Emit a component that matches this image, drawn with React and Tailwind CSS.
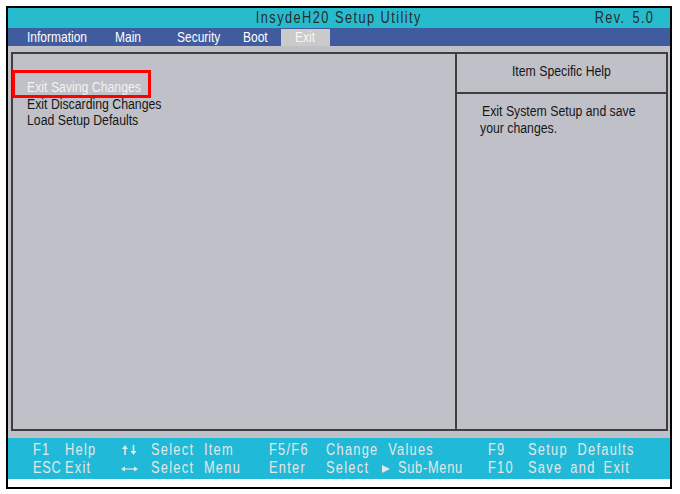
import React from "react";

const Body = ({ children, className = "" }) => (
  <span className={"inline-block whitespace-nowrap origin-left scale-x-[0.877] " + className}>{children}</span>
);

const Foot = ({ children, tight = false, mid = false }) => (
  <span
    className={
      tight
        ? "inline-block whitespace-nowrap origin-left scale-x-[0.8] tracking-[0.9px] [word-spacing:4px]"
        : mid
        ? "inline-block whitespace-nowrap origin-left scale-x-[0.8] tracking-[1.6px] [word-spacing:4px]"
        : "inline-block whitespace-nowrap origin-left scale-x-[0.8] tracking-[1.6px] [word-spacing:6px]"
    }
  >
    {children}
  </span>
);

const UpDown = () => (
  <svg width="15" height="10" viewBox="0 0 15 10" className="mt-[4px]">
    <polygon points="0,4 3,0 6,4" fill="#e6e6e6" />
    <rect x="2.2" y="3" width="1.6" height="7" fill="#e6e6e6" />
    <rect x="10.7" y="0" width="1.6" height="7" fill="#e6e6e6" />
    <polygon points="8.5,6 14.5,6 11.5,10" fill="#e6e6e6" />
  </svg>
);

const LeftRight = () => (
  <svg width="17" height="6" viewBox="0 0 17 6" className="mt-[7px]">
    <rect x="3" y="2.4" width="11" height="1.2" fill="#e6e6e6" />
    <polygon points="0,3 4,0.5 4,5.5" fill="#e6e6e6" />
    <polygon points="17,3 13,0.5 13,5.5" fill="#e6e6e6" />
  </svg>
);

const Tri = () => (
  <svg width="8" height="8" viewBox="0 0 8 8" className="mt-[6px]">
    <polygon points="0,0 8,4 0,8" fill="#e6e6e6" />
  </svg>
);

export default function App() {
  return (
    <div className="w-[680px] h-[494px] bg-white pt-[6px] pl-[6px] font-['Liberation_Sans',Arial,sans-serif]">
      <div className="w-[666px] h-[483px] border-2 border-black flex flex-col bg-white">
        {/* Title */}
        <div className="h-[20px] bg-[#26bcce] grid grid-cols-[1fr_auto_1fr] items-center text-[16px] leading-[20px] text-[#2b2b2b]">
          <div />
          <span className="inline-block whitespace-nowrap origin-center scale-x-[0.8] tracking-[1.8px]">InsydeH20 Setup Utility</span>
          <div className="justify-self-end pr-[16px]">
            <span className="inline-block whitespace-nowrap origin-right scale-x-[0.8] tracking-[1.6px] [word-spacing:3px]">Rev. 5.0</span>
          </div>
        </div>
        {/* Nav */}
        <div className="h-[18px] bg-[#405c9e] flex pl-[19px] text-[15px] leading-[18px] text-white">
          <div className="w-[88px]"><span className="inline-block whitespace-nowrap origin-left scale-x-[0.8]">Information</span></div>
          <div className="w-[62px]"><span className="inline-block whitespace-nowrap origin-left scale-x-[0.8]">Main</span></div>
          <div className="w-[66px]"><span className="inline-block whitespace-nowrap origin-left scale-x-[0.8]">Security</span></div>
          <div className="w-[38px]"><span className="inline-block whitespace-nowrap origin-left scale-x-[0.8]">Boot</span></div>
          <div className="w-[49px] mt-[1px] h-[17px] leading-[16px] bg-[#cacaca] pl-[14px] text-[#f6f6f6]">
            <span className="inline-block whitespace-nowrap origin-left scale-x-[0.8]">Exit</span>
          </div>
        </div>
        {/* Main gray area */}
        <div className="h-[392px] bg-[#c0c0c8] pt-[6px] pb-[7px] pl-[3px] pr-[2px] flex">
          <div className="flex-1 border-2 border-[#3e3e3e] flex text-[14px]">
            <div className="w-[442px] relative pt-[25px] pl-[14px] leading-[16.5px] text-[#161616]">
              <div className="text-[#f2f2f2]"><Body>Exit Saving Changes</Body></div>
              <div><Body>Exit Discarding Changes</Body></div>
              <div><Body>Load Setup Defaults</Body></div>
              <div className="absolute left-[-1px] top-[16px] w-[139px] h-[28px] border-[3px] border-[#ff0000]" />
            </div>
            <div className="flex-1 border-l-2 border-[#3e3e3e] flex flex-col text-[#161616]">
              <div className="h-[40px] border-b-2 border-[#3e3e3e] pt-[9px] leading-[17px] text-center">
                <span className="inline-block whitespace-nowrap origin-center scale-x-[0.877]">Item Specific Help</span>
              </div>
              <div className="pt-[9px] pl-[23px] leading-[16.5px]">
                <div className="pl-[2px]"><Body>Exit System Setup and save</Body></div>
                <div><Body>your changes.</Body></div>
              </div>
            </div>
          </div>
        </div>
        {/* Footer */}
        <div className="h-[41px] bg-[#20bad8] pt-[3px] pl-[25px] text-[16px] leading-[18px] text-[#e6e6e6]">
          <div className="flex h-[18px]">
            <div className="w-[32px]"><Foot>F1</Foot></div>
            <div className="w-[56px]"><Foot>Help</Foot></div>
            <div className="w-[30px] pl-[1px]"><UpDown /></div>
            <div className="w-[118px]"><Foot>Select Item</Foot></div>
            <div className="w-[57px]"><Foot>F5/F6</Foot></div>
            <div className="w-[162px]"><Foot>Change Values</Foot></div>
            <div className="w-[40px]"><Foot>F9</Foot></div>
            <div><Foot>Setup Defaults</Foot></div>
          </div>
          <div className="flex h-[18px]">
            <div className="w-[32px]"><Foot tight>ESC</Foot></div>
            <div className="w-[56px]"><Foot>Exit</Foot></div>
            <div className="w-[30px]"><LeftRight /></div>
            <div className="w-[118px]"><Foot>Select Menu</Foot></div>
            <div className="w-[57px]"><Foot>Enter</Foot></div>
            <div className="w-[162px] flex">
              <div className="w-[56px]"><Foot>Select</Foot></div>
              <div className="w-[16px]"><Tri /></div>
              <div><Foot tight>Sub-Menu</Foot></div>
            </div>
            <div className="w-[40px]"><Foot>F10</Foot></div>
            <div><Foot mid>Save and Exit</Foot></div>
          </div>
        </div>
        <div className="flex-1 bg-white" />
      </div>
    </div>
  );
}
